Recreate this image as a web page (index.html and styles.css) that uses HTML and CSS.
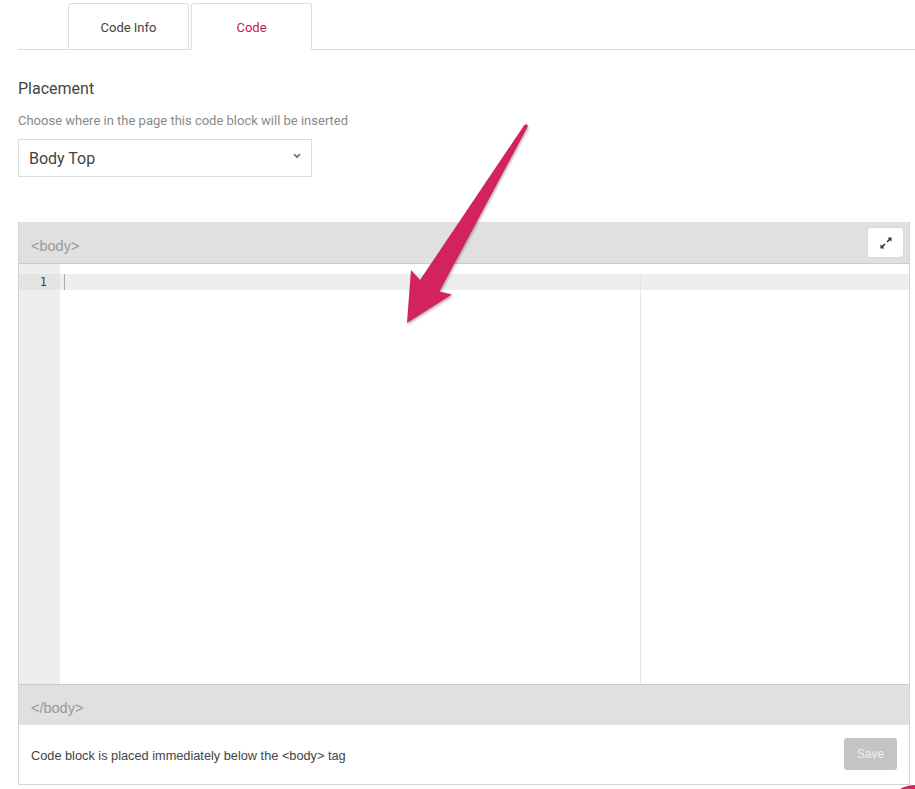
FILE: index.html
```html
<!DOCTYPE html>
<html lang="en">
<head>
<meta charset="utf-8">
<title>Code</title>
<link rel="stylesheet" href="styles.css">
</head>
<body>
<div class="page">
  <nav class="tabs">
    <a class="tab">Code Info</a>
    <a class="tab active">Code</a>
  </nav>
  <section class="placement">
    <h2 class="label">Placement</h2>
    <p class="hint">Choose where in the page this code block will be inserted</p>
    <div class="select">
      <span>Body Top</span>
      <svg class="chevron" width="8" height="6" viewBox="0 0 8 6"><path d="M1 1.2 L4 4.2 L7 1.2" fill="none" stroke="#777" stroke-width="1.8"/></svg>
    </div>
  </section>
  <section class="editor">
    <header class="bar top">
      <span class="tag">&lt;body&gt;</span>
      <button class="expand" aria-label="Expand">
        <svg width="12" height="12" viewBox="0 0 12 12"><path d="M7.6 0.6 H11.6 V4.6 L10.1 3.2 L7.6 5.6 L6.4 4.4 L8.9 1.9 Z M4.4 11.4 H0.4 V7.4 L1.9 8.8 L4.4 6.4 L5.6 7.6 L3.1 10.1 Z" fill="#3a3a3a"/></svg>
      </button>
    </header>
    <div class="code">
      <div class="gutter"><div class="num">1</div></div>
      <div class="lines">
        <div class="active-line"><i class="cursor"></i></div>
        <i class="margin"></i>
      </div>
    </div>
    <div class="bar bottom"><span class="tag">&lt;/body&gt;</span></div>
    <footer class="foot">
      <span class="note">Code block is placed immediately below the &lt;body&gt; tag</span>
      <button class="save">Save</button>
    </footer>
  </section>
  <svg class="arrow" width="915" height="789" viewBox="0 0 915 789">
    <defs>
      <filter id="sh" x="-20%" y="-20%" width="140%" height="140%">
        <feDropShadow dx="1" dy="1.5" stdDeviation="1.2" flood-color="#000" flood-opacity="0.3"/>
      </filter>
    </defs>
    <path d="M524 125.5 Q526 123.5 527.5 125 Q528 126.5 527 128 L439.5 291.5 L452 294.5 L407 323 L411 270 L420 280 Z" fill="#d22460" filter="url(#sh)"/>
  </svg>
  <i class="fab"></i>
</div>
</body>
</html>
```
FILE: styles.css
```css
* { box-sizing: border-box; }
html, body { margin: 0; padding: 0; background: #fff; }
body { font-family: Roboto, "Liberation Sans", sans-serif; color: #444; }
.page { position: relative; width: 915px; height: 789px; overflow: hidden; padding: 3px 5px 0 18px; }
.tabs { display: flex; gap: 2px; height: 47px; padding-left: 50px; margin-right: -5px; border-bottom: 1px solid #ddd; }
.tab { width: 121px; height: 47px; padding-top: 2px; display: flex; align-items: center; justify-content: center; font-size: 13px; color: #444; border: 1px solid #ddd; border-radius: 3px 3px 0 0; background: #fff; }
.tab.active { color: #c2185b; border-bottom-color: #fff; }
.placement { padding-top: 29px; }
.label { margin: 0; font-size: 16px; line-height: 19px; font-weight: 400; color: #444; }
.hint { margin: 15px 0 0; font-size: 13px; line-height: 15px; color: #8a8a8a; }
.select { width: 294px; height: 38px; margin-top: 11px; padding: 0 10px; display: flex; align-items: center; justify-content: space-between; border: 1px solid #ddd; font-size: 16px; color: #444; }
.chevron { margin: 0 0 4px; }
.editor { margin-top: 45px; width: 892px; height: 563px; border: 1px solid #d4d4d4; border-top: 0; display: flex; flex-direction: column; }
.bar { background: #e0e0e0; display: flex; align-items: center; padding: 0 5px 0 12px; flex: none; font-family: "Liberation Sans", Arial, sans-serif; }
.bar.top { height: 42px; border-bottom: 1px solid #ccc; }
.bar.bottom { height: 41px; border-top: 1px solid #ccc; }
.tag { font-size: 14.5px; color: #999; position: relative; top: 3px; }
.expand { margin-left: auto; width: 37px; height: 31px; padding: 0; display: flex; align-items: center; justify-content: center; background: #fff; border: 1px solid #d8d8d8; border-radius: 3px; }
.code { flex: 1; display: flex; min-height: 0; background: #fff; }
.gutter { width: 41px; flex: none; background: #eee; padding-top: 10px; }
.num { height: 16px; background: #e4e4e4; text-align: right; padding-right: 13px; font: 12px/16px "DejaVu Sans Mono", monospace; color: #444; }
.lines { flex: 1; position: relative; padding-top: 10px; }
.active-line { height: 16px; background: #eee; padding-left: 4px; }
.cursor { display: block; width: 1px; height: 16px; background: #aaa; }
.margin { position: absolute; left: 580px; top: 10px; bottom: 0; width: 1px; background: #e6e6e6; }
.foot { height: 59px; flex: none; display: flex; align-items: center; justify-content: space-between; padding: 0 12px; font: 12.75px "Liberation Sans", Arial, sans-serif; color: #444; }
.note { position: relative; top: 1px; }
.save { width: 53px; height: 32px; margin-top: -1px; padding: 0; border: 0; border-radius: 3px; background: #c4c4c4; color: #eee; font: 12px "Liberation Sans", Arial, sans-serif; }
.arrow { position: absolute; left: 0; top: 0; pointer-events: none; }
.fab { position: absolute; left: 885px; top: 785px; width: 60px; height: 60px; border-radius: 50%; background: #d22460; }
```
